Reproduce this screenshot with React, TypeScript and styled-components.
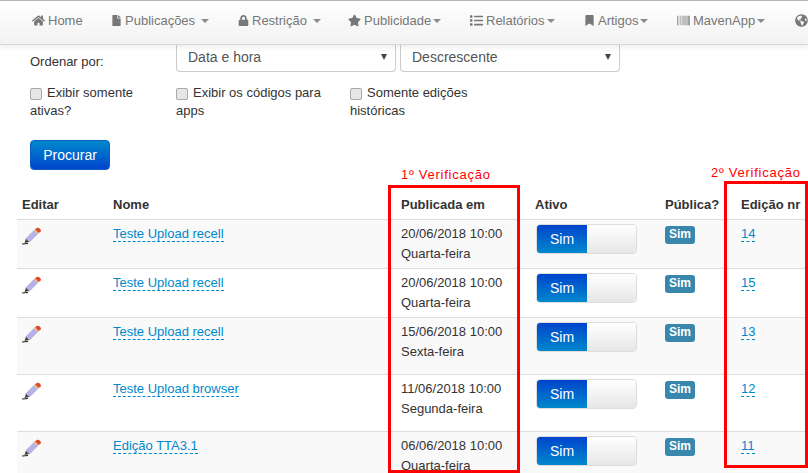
import React from 'react';
import styled, { createGlobalStyle } from 'styled-components';
import { FaBarcode, FaBookmark, FaFile, FaGlobeAmericas, FaHome, FaList, FaLock, FaStar } from 'react-icons/fa';

const GlobalStyle = createGlobalStyle`
  html, body {
    margin: 0;
    padding: 0;
    height: 473px;
    overflow: hidden;
    background: #fff;
    font-family: "Liberation Sans", Arial, sans-serif;
    font-size: 13px;
    line-height: 20px;
    color: #333;
  }
`;

const Page = styled.div`
  position: relative;
  width: 808px;
  height: 473px;
  overflow: hidden;
`;

const Navbar = styled.nav`
  position: relative;
  z-index: 2;
  display: flex;
  height: 45px;
  box-sizing: border-box;
  padding: 0 0 4px 17px;
  white-space: nowrap;
  background: linear-gradient(to bottom, #fff 0%, #f2f2f2 100%);
  border-top: 1px solid #b5b5b5;
  border-bottom: 1px solid #d8d8d8;
  box-shadow: 0 2px 6px rgba(0, 0, 0, 0.08);
`;

const NavItem = styled.a<{ $width: number }>`
  display: flex;
  align-items: center;
  flex: none;
  width: ${props => props.$width}px;
  box-sizing: border-box;
  padding-left: 15px;
  color: #777;
  svg {
    flex: none;
    margin-right: 3px;
  }
`;

const Caret = styled.span<{ $gap?: number }>`
  width: 0;
  height: 0;
  margin-left: ${props => props.$gap ?? 2}px;
  border-left: 4px solid transparent;
  border-right: 4px solid transparent;
  border-top: 4px solid #8a8a8a;
`;

const Filters = styled.section`
  padding-left: 30px;
`;

const SortRow = styled.div`
  display: flex;
`;

const SortLabel = styled.label`
  width: 146px;
  padding-top: 7px;
  color: #333;
`;

const SelectBox = styled.div`
  display: flex;
  align-items: center;
  justify-content: space-between;
  width: 220px;
  height: 27px;
  box-sizing: border-box;
  margin-right: 4px;
  padding: 0 8px 3px 11px;
  border: 1px solid #ccc;
  border-top: none;
  border-radius: 0 0 4px 4px;
  font-size: 14px;
  color: #555;
`;

const SelectArrow = styled.span`
  width: 0;
  height: 0;
  border-left: 3.5px solid transparent;
  border-right: 3.5px solid transparent;
  border-top: 6px solid #444;
`;

const CheckRow = styled.div`
  display: flex;
  margin-top: 12px;
  line-height: 18px;
`;

const CheckLabel = styled.label<{ $width: number }>`
  width: ${props => props.$width}px;
  color: #333;
`;

const CheckBox = styled.span`
  display: inline-block;
  width: 10px;
  height: 10px;
  margin-right: 5px;
  vertical-align: -3px;
  background: #e6e6e6;
  border: 1px solid #a8a8a8;
  border-radius: 2px;
`;

const SearchButton = styled.button`
  display: block;
  width: 80px;
  height: 30px;
  margin-top: 20px;
  padding: 0;
  color: #fff;
  font: inherit;
  font-size: 14px;
  background: linear-gradient(to bottom, #0088cc 0%, #0044cc 100%);
  border: 1px solid #0a5fc0;
  border-radius: 4px;
`;

const Table = styled.table`
  width: 791px;
  margin: 14px 0 0 17px;
  table-layout: fixed;
  border-collapse: collapse;
  border-spacing: 0;
`;

const HeadCell = styled.th`
  height: 35px;
  box-sizing: border-box;
  padding: 5px 5px 4px;
  white-space: nowrap;
  text-align: left;
  vertical-align: bottom;
  font-weight: bold;
  color: #333;
`;

const Row = styled.tr<{ $striped: boolean }>`
  background: ${props => props.$striped ? '#f9f9f9' : '#fff'};
  border-top: 1px solid #ddd;
`;

const Cell = styled.td<{ $height: number }>`
  height: ${props => props.$height}px;
  box-sizing: border-box;
  padding: 4px 5px 0;
  vertical-align: top;
`;

const EditLink = styled.a`
  display: block;
  width: 20px;
  height: 20px;
  margin-top: 3px;
`;

const NameLink = styled.a`
  color: #0088cc;
  border-bottom: 1px dashed #0088cc;
`;

const SwitchBox = styled.div`
  display: flex;
  width: 101px;
  height: 30px;
  box-sizing: border-box;
  margin: 0 0 0 1px;
  overflow: hidden;
  border: 1px solid #ddd;
  border-radius: 4px;
`;

const SwitchOn = styled.span`
  width: 50px;
  font-size: 14px;
  line-height: 28px;
  text-align: center;
  color: #fff;
  background: linear-gradient(to bottom, #0044cc 0%, #0088cc 100%);
`;

const SwitchOff = styled.span`
  flex: 1;
  background: linear-gradient(to bottom, #fff 0%, #e6e6e6 100%);
`;

const Badge = styled.span`
  display: inline-block;
  width: 30px;
  height: 18px;
  margin-top: 1px;
  font-size: 12px;
  font-weight: bold;
  line-height: 17px;
  text-align: center;
  color: #fff;
  background: #3a87ad;
  border-radius: 3px;
`;

const RedBox = styled.div<{ $left: number; $top: number; $width: number; $height: number }>`
  position: absolute;
  z-index: 1;
  left: ${props => props.$left}px;
  top: ${props => props.$top}px;
  width: ${props => props.$width}px;
  height: ${props => props.$height}px;
  box-sizing: border-box;
  border: 3px solid #ff0000;
  pointer-events: none;
`;

const RedLabel = styled.span<{ $left: number; $top: number }>`
  position: absolute;
  z-index: 1;
  left: ${props => props.$left}px;
  top: ${props => props.$top}px;
  font-size: 13px;
  line-height: 16px;
  letter-spacing: 0.75px;
  color: #ff0000;
`;

const PencilIcon = () => (
  <svg width="20" height="18" viewBox="0 0 20 18">
    <path d="M0 17 L6 16.5" stroke="#222" strokeWidth="1.2" />
    <path d="M2.5 16 L4 11.5 L7.5 15 Z" fill="#4a4030" />
    <path d="M4 11.5 L13 2.5 L16.5 6 L7.5 15 Z" fill="#b4b2e8" stroke="#9a96c8" strokeWidth="0.5" />
    <path d="M13 2.5 L15 0.8 Q16.5 0.2 18 1.8 Q19.5 3.4 18.8 4.5 L16.5 6 Z" fill="#dc4a2a" />
    <path d="M13 2.5 L16.5 6 L15.5 7 L12 3.5 Z" fill="#e8c878" />
  </svg>
);

const rows = [
  { name: 'Teste Upload recell', date: '20/06/2018 10:00', day: 'Quarta-feira', edition: '14', height: 49 },
  { name: 'Teste Upload recell', date: '20/06/2018 10:00', day: 'Quarta-feira', edition: '15', height: 49 },
  { name: 'Teste Upload recell', date: '15/06/2018 10:00', day: 'Sexta-feira', edition: '13', height: 57 },
  { name: 'Teste Upload browser', date: '11/06/2018 10:00', day: 'Segunda-feira', edition: '12', height: 57 },
  { name: 'Edição TTA3.1', date: '06/06/2018 10:00', day: 'Quarta-feira', edition: '11', height: 49 },
];

const App: React.FC = () => {
  return (
    <Page>
      <GlobalStyle />
      <Navbar>
        <NavItem $width={79}><FaHome size={13} />Home</NavItem>
        <NavItem $width={127}><FaFile size={11} />Publicações<Caret $gap={6} /></NavItem>
        <NavItem $width={110}><FaLock size={11} />Restrição<Caret $gap={6} /></NavItem>
        <NavItem $width={122}><FaStar size={13} />Publicidade<Caret /></NavItem>
        <NavItem $width={114}><FaList size={13} />Relatórios<Caret /></NavItem>
        <NavItem $width={93}><FaBookmark size={11} />Artigos<Caret /></NavItem>
        <NavItem $width={118}><FaBarcode size={13} />MavenApp<Caret /></NavItem>
        <NavItem $width={40}><FaGlobeAmericas size={13} /></NavItem>
      </Navbar>
      <Filters>
        <SortRow>
          <SortLabel>Ordenar por:</SortLabel>
          <SelectBox>Data e hora<SelectArrow /></SelectBox>
          <SelectBox>Descrescente<SelectArrow /></SelectBox>
        </SortRow>
        <CheckRow>
          <CheckLabel $width={146}><CheckBox />Exibir somente<br />ativas?</CheckLabel>
          <CheckLabel $width={174}><CheckBox />Exibir os códigos para<br />apps</CheckLabel>
          <CheckLabel $width={160}><CheckBox />Somente edições<br />históricas</CheckLabel>
        </CheckRow>
        <SearchButton>Procurar</SearchButton>
      </Filters>
      <Table>
        <colgroup>
          <col width={91} />
          <col width={288} />
          <col width={134} />
          <col width={130} />
          <col width={76} />
          <col width={72} />
        </colgroup>
        <thead>
          <tr>
            <HeadCell>Editar</HeadCell>
            <HeadCell>Nome</HeadCell>
            <HeadCell>Publicada em</HeadCell>
            <HeadCell>Ativo</HeadCell>
            <HeadCell>Pública?</HeadCell>
            <HeadCell>Edição nr</HeadCell>
          </tr>
        </thead>
        <tbody>
          {rows.map((row, i) => (
            <Row key={row.edition} $striped={i % 2 === 0}>
              <Cell $height={row.height}><EditLink><PencilIcon /></EditLink></Cell>
              <Cell $height={row.height}><NameLink>{row.name}</NameLink></Cell>
              <Cell $height={row.height}>{row.date}<br />{row.day}</Cell>
              <Cell $height={row.height}><SwitchBox><SwitchOn>Sim</SwitchOn><SwitchOff /></SwitchBox></Cell>
              <Cell $height={row.height}><Badge>Sim</Badge></Cell>
              <Cell $height={row.height}><NameLink>{row.edition}</NameLink></Cell>
            </Row>
          ))}
        </tbody>
      </Table>
      <RedLabel $left={401} $top={167}>1º Verificação</RedLabel>
      <RedLabel $left={711} $top={165}>2º Verificação</RedLabel>
      <RedBox $left={388} $top={185} $width={132} $height={288} />
      <RedBox $left={724} $top={181} $width={84} $height={287} />
    </Page>
  );
};

export default App;
